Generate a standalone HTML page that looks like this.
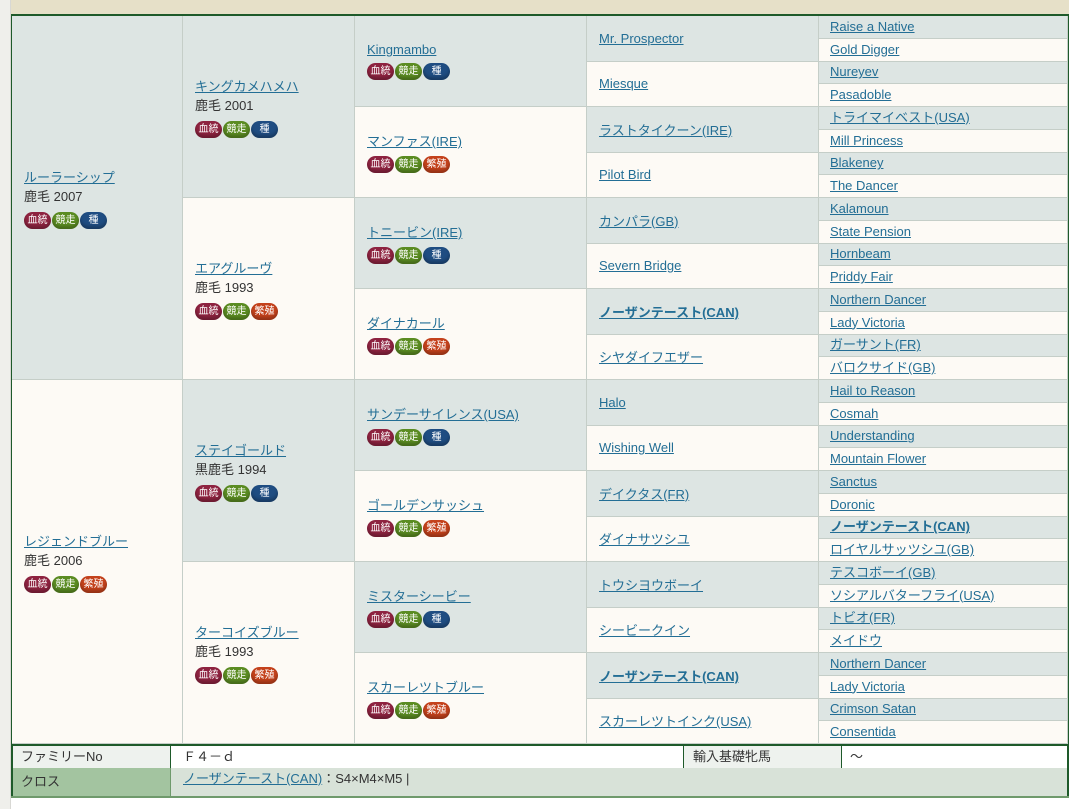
<!DOCTYPE html>
<html><head><meta charset="utf-8"><style>
*{margin:0;padding:0;box-sizing:border-box}
body{width:1080px;height:809px;background:#fff;font-family:"Liberation Sans","Noto Sans CJK JP",sans-serif;font-size:13px;color:#333;position:relative;overflow:hidden}
.c{position:absolute;display:flex;flex-direction:column;justify-content:center;padding-left:12px;border-right:1px solid #c5cec8;border-bottom:1px solid #c5cec8}
.g{background:#dde5e3}.w{background:#fdfaf5}
a{color:#236e95;text-decoration:underline}
b a,a b{font-weight:bold}
.s{line-height:18px;margin-top:2px}
.bd{display:flex;gap:1px;margin-top:6px}
.bd span{display:inline-block;width:27px;height:17px;border-radius:9px;color:#fff;font-size:10px;line-height:17px;text-align:center;box-shadow:inset 0 -3px 3px rgba(0,0,0,.25)}
.r{background:#8e2340}.gr{background:#5b8c22}.bl{background:#1f4d82}.o{background:#c4421c}
.g5{padding-left:11px;font-size:13px}
.g5 a{line-height:16px}
</style></head><body>
<div style="position:absolute;left:0;top:0;width:11px;height:809px;background:#efefeb;border-right:1px solid #d8d8d4"></div>
<div style="position:absolute;left:11px;top:0;width:1058px;height:16px;background:#e6e0c8;border-bottom:2px solid #1e5a2a"></div>
<div style="position:absolute;left:11px;top:15px;width:1058px;height:782px;border-left:2px solid #1e5a2a;border-right:2px solid #1e5a2a"></div>

<!-- gen1 -->
<div class="c g" style="left:12px;top:16px;width:171px;height:364px"><a>ルーラーシップ</a><div class="s">鹿毛 2007</div><div class="bd"><span class="r">血統</span><span class="gr">競走</span><span class="bl">種</span></div></div>
<div class="c w" style="left:12px;top:380px;width:171px;height:364px"><a>レジェンドブルー</a><div class="s">鹿毛 2006</div><div class="bd"><span class="r">血統</span><span class="gr">競走</span><span class="o">繁殖</span></div></div>
<!-- gen2 -->
<div class="c g" style="left:183px;top:16px;width:172px;height:182px"><a>キングカメハメハ</a><div class="s">鹿毛 2001</div><div class="bd"><span class="r">血統</span><span class="gr">競走</span><span class="bl">種</span></div></div>
<div class="c w" style="left:183px;top:198px;width:172px;height:182px"><a>エアグルーヴ</a><div class="s">鹿毛 1993</div><div class="bd"><span class="r">血統</span><span class="gr">競走</span><span class="o">繁殖</span></div></div>
<div class="c g" style="left:183px;top:380px;width:172px;height:182px"><a>ステイゴールド</a><div class="s">黒鹿毛 1994</div><div class="bd"><span class="r">血統</span><span class="gr">競走</span><span class="bl">種</span></div></div>
<div class="c w" style="left:183px;top:562px;width:172px;height:182px"><a>ターコイズブルー</a><div class="s">鹿毛 1993</div><div class="bd"><span class="r">血統</span><span class="gr">競走</span><span class="o">繁殖</span></div></div>
<!-- gen3 -->
<div class="c g" style="left:355px;top:16px;width:232px;height:91px"><a>Kingmambo</a><div class="bd"><span class="r">血統</span><span class="gr">競走</span><span class="bl">種</span></div></div>
<div class="c w" style="left:355px;top:107px;width:232px;height:91px"><a>マンファス(IRE)</a><div class="bd"><span class="r">血統</span><span class="gr">競走</span><span class="o">繁殖</span></div></div>
<div class="c g" style="left:355px;top:198px;width:232px;height:91px"><a>トニービン(IRE)</a><div class="bd"><span class="r">血統</span><span class="gr">競走</span><span class="bl">種</span></div></div>
<div class="c w" style="left:355px;top:289px;width:232px;height:91px"><a>ダイナカール</a><div class="bd"><span class="r">血統</span><span class="gr">競走</span><span class="o">繁殖</span></div></div>
<div class="c g" style="left:355px;top:380px;width:232px;height:91px"><a>サンデーサイレンス(USA)</a><div class="bd"><span class="r">血統</span><span class="gr">競走</span><span class="bl">種</span></div></div>
<div class="c w" style="left:355px;top:471px;width:232px;height:91px"><a>ゴールデンサッシュ</a><div class="bd"><span class="r">血統</span><span class="gr">競走</span><span class="o">繁殖</span></div></div>
<div class="c g" style="left:355px;top:562px;width:232px;height:91px"><a>ミスターシービー</a><div class="bd"><span class="r">血統</span><span class="gr">競走</span><span class="bl">種</span></div></div>
<div class="c w" style="left:355px;top:653px;width:232px;height:91px"><a>スカーレツトブルー</a><div class="bd"><span class="r">血統</span><span class="gr">競走</span><span class="o">繁殖</span></div></div>
<!-- gen4 -->
<div class="c g" style="left:587px;top:16px;width:232px;height:45.5px"><a>Mr. Prospector</a></div>
<div class="c w" style="left:587px;top:61.5px;width:232px;height:45.5px"><a>Miesque</a></div>
<div class="c g" style="left:587px;top:107px;width:232px;height:45.5px"><a>ラストタイクーン(IRE)</a></div>
<div class="c w" style="left:587px;top:152.5px;width:232px;height:45.5px"><a>Pilot Bird</a></div>
<div class="c g" style="left:587px;top:198px;width:232px;height:45.5px"><a>カンパラ(GB)</a></div>
<div class="c w" style="left:587px;top:243.5px;width:232px;height:45.5px"><a>Severn Bridge</a></div>
<div class="c g" style="left:587px;top:289px;width:232px;height:45.5px"><a><b>ノーザンテースト(CAN)</b></a></div>
<div class="c w" style="left:587px;top:334.5px;width:232px;height:45.5px"><a>シヤダイフエザー</a></div>
<div class="c g" style="left:587px;top:380px;width:232px;height:45.5px"><a>Halo</a></div>
<div class="c w" style="left:587px;top:425.5px;width:232px;height:45.5px"><a>Wishing Well</a></div>
<div class="c g" style="left:587px;top:471px;width:232px;height:45.5px"><a>デイクタス(FR)</a></div>
<div class="c w" style="left:587px;top:516.5px;width:232px;height:45.5px"><a>ダイナサツシユ</a></div>
<div class="c g" style="left:587px;top:562px;width:232px;height:45.5px"><a>トウシヨウボーイ</a></div>
<div class="c w" style="left:587px;top:607.5px;width:232px;height:45.5px"><a>シービークイン</a></div>
<div class="c g" style="left:587px;top:653px;width:232px;height:45.5px"><a><b>ノーザンテースト(CAN)</b></a></div>
<div class="c w" style="left:587px;top:698.5px;width:232px;height:45.5px"><a>スカーレツトインク(USA)</a></div>
<!-- gen5 -->
<div class="c g g5" style="left:819px;top:16px;width:249px;height:22.75px"><a>Raise a Native</a></div>
<div class="c w g5" style="left:819px;top:38.75px;width:249px;height:22.75px"><a>Gold Digger</a></div>
<div class="c g g5" style="left:819px;top:61.5px;width:249px;height:22.75px"><a>Nureyev</a></div>
<div class="c w g5" style="left:819px;top:84.25px;width:249px;height:22.75px"><a>Pasadoble</a></div>
<div class="c g g5" style="left:819px;top:107px;width:249px;height:22.75px"><a>トライマイベスト(USA)</a></div>
<div class="c w g5" style="left:819px;top:129.75px;width:249px;height:22.75px"><a>Mill Princess</a></div>
<div class="c g g5" style="left:819px;top:152.5px;width:249px;height:22.75px"><a>Blakeney</a></div>
<div class="c w g5" style="left:819px;top:175.25px;width:249px;height:22.75px"><a>The Dancer</a></div>
<div class="c g g5" style="left:819px;top:198px;width:249px;height:22.75px"><a>Kalamoun</a></div>
<div class="c w g5" style="left:819px;top:220.75px;width:249px;height:22.75px"><a>State Pension</a></div>
<div class="c g g5" style="left:819px;top:243.5px;width:249px;height:22.75px"><a>Hornbeam</a></div>
<div class="c w g5" style="left:819px;top:266.25px;width:249px;height:22.75px"><a>Priddy Fair</a></div>
<div class="c g g5" style="left:819px;top:289px;width:249px;height:22.75px"><a>Northern Dancer</a></div>
<div class="c w g5" style="left:819px;top:311.75px;width:249px;height:22.75px"><a>Lady Victoria</a></div>
<div class="c g g5" style="left:819px;top:334.5px;width:249px;height:22.75px"><a>ガーサント(FR)</a></div>
<div class="c w g5" style="left:819px;top:357.25px;width:249px;height:22.75px"><a>バロクサイド(GB)</a></div>
<div class="c g g5" style="left:819px;top:380px;width:249px;height:22.75px"><a>Hail to Reason</a></div>
<div class="c w g5" style="left:819px;top:402.75px;width:249px;height:22.75px"><a>Cosmah</a></div>
<div class="c g g5" style="left:819px;top:425.5px;width:249px;height:22.75px"><a>Understanding</a></div>
<div class="c w g5" style="left:819px;top:448.25px;width:249px;height:22.75px"><a>Mountain Flower</a></div>
<div class="c g g5" style="left:819px;top:471px;width:249px;height:22.75px"><a>Sanctus</a></div>
<div class="c w g5" style="left:819px;top:493.75px;width:249px;height:22.75px"><a>Doronic</a></div>
<div class="c g g5" style="left:819px;top:516.5px;width:249px;height:22.75px"><a><b>ノーザンテースト(CAN)</b></a></div>
<div class="c w g5" style="left:819px;top:539.25px;width:249px;height:22.75px"><a>ロイヤルサッツシユ(GB)</a></div>
<div class="c g g5" style="left:819px;top:562px;width:249px;height:22.75px"><a>テスコボーイ(GB)</a></div>
<div class="c w g5" style="left:819px;top:584.75px;width:249px;height:22.75px"><a>ソシアルバターフライ(USA)</a></div>
<div class="c g g5" style="left:819px;top:607.5px;width:249px;height:22.75px"><a>トビオ(FR)</a></div>
<div class="c w g5" style="left:819px;top:630.25px;width:249px;height:22.75px"><a>メイドウ</a></div>
<div class="c g g5" style="left:819px;top:653px;width:249px;height:22.75px"><a>Northern Dancer</a></div>
<div class="c w g5" style="left:819px;top:675.75px;width:249px;height:22.75px"><a>Lady Victoria</a></div>
<div class="c g g5" style="left:819px;top:698.5px;width:249px;height:22.75px"><a>Crimson Satan</a></div>
<div class="c w g5" style="left:819px;top:721.25px;width:249px;height:22.75px"><a>Consentida</a></div>

<!-- footer -->
<div style="position:absolute;left:11px;top:744px;width:1058px;height:2px;background:#1e5a2a"></div>
<div style="position:absolute;left:13px;top:746px;width:158px;height:22px;background:#eef2ee;border-right:1px solid #1e5a2a;padding:3px 8px;line-height:16px">ファミリーNo</div>
<div style="position:absolute;left:171px;top:746px;width:512px;height:22px;background:#fff;padding:3px 12px;line-height:16px">Ｆ４－ｄ</div>
<div style="position:absolute;left:683px;top:746px;width:159px;height:22px;background:#eef2ee;border-left:1px solid #1e5a2a;border-right:1px solid #1e5a2a;padding:3px 9px;line-height:16px">輸入基礎牝馬</div>
<div style="position:absolute;left:842px;top:746px;width:225px;height:22px;background:#fff;padding:3px 8px;line-height:16px">～</div>
<div style="position:absolute;left:13px;top:768px;width:158px;height:28px;background:#a3c4a0;border-right:1px solid #6f9a6c;padding:5px 8px;line-height:18px">クロス</div>
<div style="position:absolute;left:171px;top:768px;width:896px;height:28px;background:#d8e2d8;padding:3px 12px;line-height:16px"><a>ノーザンテースト(CAN)</a>：S4×M4×M5 |</div>
<div style="position:absolute;left:11px;top:796px;width:1058px;height:2px;background:#6f9a6c"></div>
</body></html>
